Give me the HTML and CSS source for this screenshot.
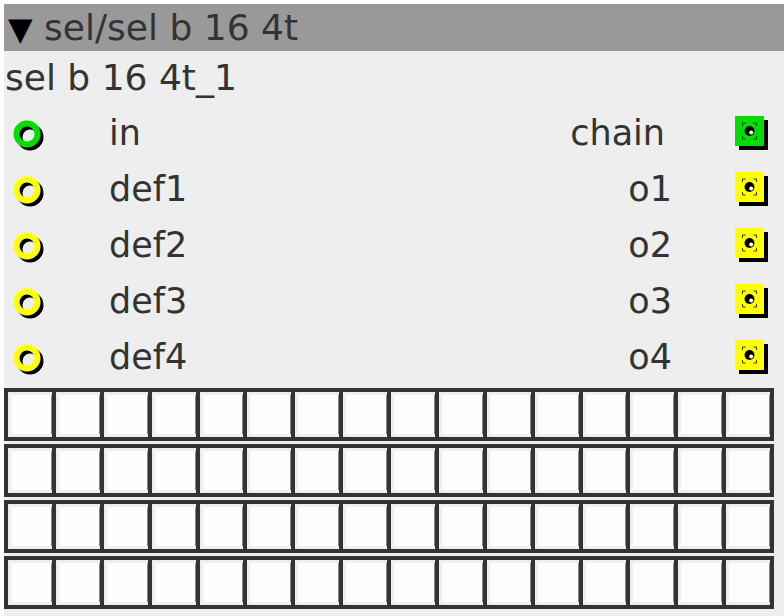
FILE: index.html
```html
<!DOCTYPE html>
<html lang="en">
<head>
    <meta charset="UTF-8">
    <title>sel/sel b 16 4t</title>
    <link rel="stylesheet" href="styles.css">
</head>
<body>
    <div class="node">
        <div class="node-title"><span class="arrow">▼</span> sel/sel b 16 4t</div>
        <div class="node-name">sel b 16 4t_1</div>

        <!-- ports -->
        <div class="port-row">
            <svg class="inlet" width="44" height="44" viewBox="0 0 44 44"><circle cx="23" cy="26" r="10.5" fill="none" stroke="#000" stroke-width="6"/><circle cx="20" cy="23" r="10.5" fill="none" stroke="#00dd00" stroke-width="6"/></svg>
            <span class="in-label">in</span>
            <span class="out-label chain">chain</span>
            <svg class="outlet" width="38" height="40" viewBox="0 0 38 40"><rect x="5" y="7" width="29" height="30" fill="#000"/><rect x="1" y="3" width="29" height="30" fill="#00dd00"/><path d="M8.5 13v-3h3M19.5 10h3v3M22.5 23v3h-3M11.5 26h-3v-3" fill="none" stroke="#333" stroke-width="1"/><circle cx="15.5" cy="18" r="5" fill="#000"/><circle cx="17.2" cy="19.6" r="2" fill="#fff"/></svg>
        </div>
        <div class="port-row">
            <svg class="inlet" width="44" height="44" viewBox="0 0 44 44"><circle cx="23" cy="26" r="10.5" fill="none" stroke="#000" stroke-width="6"/><circle cx="20" cy="23" r="10.5" fill="none" stroke="#ffff00" stroke-width="6"/></svg>
            <span class="in-label">def1</span>
            <span class="out-label">o1</span>
            <svg class="outlet" width="38" height="40" viewBox="0 0 38 40"><rect x="5" y="7" width="29" height="30" fill="#000"/><rect x="1" y="3" width="29" height="30" fill="#ffff00"/><path d="M8.5 13v-3h3M19.5 10h3v3M22.5 23v3h-3M11.5 26h-3v-3" fill="none" stroke="#333" stroke-width="1"/><circle cx="15.5" cy="18" r="5" fill="#000"/><circle cx="17.2" cy="19.6" r="2" fill="#fff"/></svg>
        </div>
        <div class="port-row">
            <svg class="inlet" width="44" height="44" viewBox="0 0 44 44"><circle cx="23" cy="26" r="10.5" fill="none" stroke="#000" stroke-width="6"/><circle cx="20" cy="23" r="10.5" fill="none" stroke="#ffff00" stroke-width="6"/></svg>
            <span class="in-label">def2</span>
            <span class="out-label">o2</span>
            <svg class="outlet" width="38" height="40" viewBox="0 0 38 40"><rect x="5" y="7" width="29" height="30" fill="#000"/><rect x="1" y="3" width="29" height="30" fill="#ffff00"/><path d="M8.5 13v-3h3M19.5 10h3v3M22.5 23v3h-3M11.5 26h-3v-3" fill="none" stroke="#333" stroke-width="1"/><circle cx="15.5" cy="18" r="5" fill="#000"/><circle cx="17.2" cy="19.6" r="2" fill="#fff"/></svg>
        </div>
        <div class="port-row">
            <svg class="inlet" width="44" height="44" viewBox="0 0 44 44"><circle cx="23" cy="26" r="10.5" fill="none" stroke="#000" stroke-width="6"/><circle cx="20" cy="23" r="10.5" fill="none" stroke="#ffff00" stroke-width="6"/></svg>
            <span class="in-label">def3</span>
            <span class="out-label">o3</span>
            <svg class="outlet" width="38" height="40" viewBox="0 0 38 40"><rect x="5" y="7" width="29" height="30" fill="#000"/><rect x="1" y="3" width="29" height="30" fill="#ffff00"/><path d="M8.5 13v-3h3M19.5 10h3v3M22.5 23v3h-3M11.5 26h-3v-3" fill="none" stroke="#333" stroke-width="1"/><circle cx="15.5" cy="18" r="5" fill="#000"/><circle cx="17.2" cy="19.6" r="2" fill="#fff"/></svg>
        </div>
        <div class="port-row">
            <svg class="inlet" width="44" height="44" viewBox="0 0 44 44"><circle cx="23" cy="26" r="10.5" fill="none" stroke="#000" stroke-width="6"/><circle cx="20" cy="23" r="10.5" fill="none" stroke="#ffff00" stroke-width="6"/></svg>
            <span class="in-label">def4</span>
            <span class="out-label">o4</span>
            <svg class="outlet" width="38" height="40" viewBox="0 0 38 40"><rect x="5" y="7" width="29" height="30" fill="#000"/><rect x="1" y="3" width="29" height="30" fill="#ffff00"/><path d="M8.5 13v-3h3M19.5 10h3v3M22.5 23v3h-3M11.5 26h-3v-3" fill="none" stroke="#333" stroke-width="1"/><circle cx="15.5" cy="18" r="5" fill="#000"/><circle cx="17.2" cy="19.6" r="2" fill="#fff"/></svg>
        </div>

        <!-- toggle grid -->
        <div class="grid">
            <div class="grid-row">
                <div class="cell"></div><div class="cell"></div><div class="cell"></div><div class="cell"></div>
                <div class="cell"></div><div class="cell"></div><div class="cell"></div><div class="cell"></div>
                <div class="cell"></div><div class="cell"></div><div class="cell"></div><div class="cell"></div>
                <div class="cell"></div><div class="cell"></div><div class="cell"></div><div class="cell"></div>
            </div>
            <div class="grid-row">
                <div class="cell"></div><div class="cell"></div><div class="cell"></div><div class="cell"></div>
                <div class="cell"></div><div class="cell"></div><div class="cell"></div><div class="cell"></div>
                <div class="cell"></div><div class="cell"></div><div class="cell"></div><div class="cell"></div>
                <div class="cell"></div><div class="cell"></div><div class="cell"></div><div class="cell"></div>
            </div>
            <div class="grid-row">
                <div class="cell"></div><div class="cell"></div><div class="cell"></div><div class="cell"></div>
                <div class="cell"></div><div class="cell"></div><div class="cell"></div><div class="cell"></div>
                <div class="cell"></div><div class="cell"></div><div class="cell"></div><div class="cell"></div>
                <div class="cell"></div><div class="cell"></div><div class="cell"></div><div class="cell"></div>
            </div>
            <div class="grid-row">
                <div class="cell"></div><div class="cell"></div><div class="cell"></div><div class="cell"></div>
                <div class="cell"></div><div class="cell"></div><div class="cell"></div><div class="cell"></div>
                <div class="cell"></div><div class="cell"></div><div class="cell"></div><div class="cell"></div>
                <div class="cell"></div><div class="cell"></div><div class="cell"></div><div class="cell"></div>
            </div>
        </div>
    </div>
</body>
</html>
```

FILE: styles.css
```css
body {
    margin: 0;
    background: #fff;
    overflow: hidden;
    font-family: 'DejaVu Sans', sans-serif;
    color: #333;
}
.node {
    margin: 4px 0 0 4px;
    width: 780px;
    height: 612px;
    background: #eee;
}
.node-title {
    height: 47px;
    line-height: 47px;
    background: #999;
    font-size: 36px;
    padding-left: 4px;
    white-space: nowrap;
}
.arrow {
    color: #000;
    font-size: 32px;
}
.node-name {
    height: 54px;
    line-height: 54px;
    font-size: 36px;
    padding-left: 1px;
}
.port-row {
    display: grid;
    grid-template-columns: 105px 1fr auto 62px 38px 12px;
    align-items: center;
    height: 56px;
    font-size: 35px;
}
.inlet {
    margin-left: 3px;
}
.in-label {
    grid-column: 2;
}
.out-label {
    grid-column: 3;
    text-align: right;
}
.out-label.chain {
    margin-right: 7px;
}
.outlet {
    grid-column: 5;
}
.grid {
    display: flex;
    flex-direction: column;
    gap: 3px;
    margin-top: 3px;
}
.grid-row {
    display: flex;
    gap: 4px;
    padding: 4px;
    width: 762px;
    background: #333;
}
.cell {
    flex: 1;
    height: 45px;
    background: #fdfdfd;
    box-shadow: inset 3px 0 0 #eee, inset 0 3px 0 #eee, inset 0 -3px 0 #eee, inset -1px 0 0 #888;
}
```
